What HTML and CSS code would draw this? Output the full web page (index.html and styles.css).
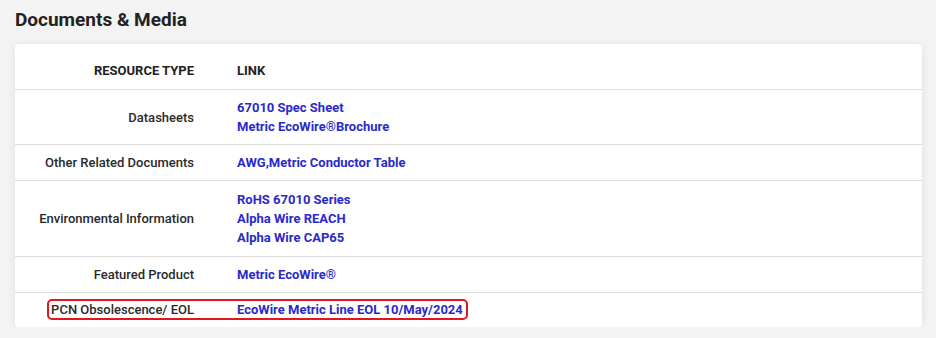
FILE: index.html
```html
<!DOCTYPE html>
<html lang="en">
<head>
    <meta charset="UTF-8">
    <title>Documents &amp; Media</title>
    <link rel="stylesheet" href="styles.css">
</head>
<body>
    <h2 class="section-title">Documents &amp; Media</h2>

    <div class="docs-card">
        <div class="docs-row docs-head">
            <div class="docs-type">RESOURCE TYPE</div>
            <div class="docs-links">LINK</div>
        </div>

        <div class="docs-row">
            <div class="docs-type">Datasheets</div>
            <div class="docs-links">
                <a href="#">67010 Spec Sheet</a>
                <a href="#">Metric EcoWire®Brochure</a>
            </div>
        </div>

        <div class="docs-row">
            <div class="docs-type">Other Related Documents</div>
            <div class="docs-links">
                <a href="#">AWG,Metric Conductor Table</a>
            </div>
        </div>

        <div class="docs-row tall">
            <div class="docs-type">Environmental Information</div>
            <div class="docs-links">
                <a href="#">RoHS 67010 Series</a>
                <a href="#">Alpha Wire REACH</a>
                <a href="#">Alpha Wire CAP65</a>
            </div>
        </div>

        <div class="docs-row">
            <div class="docs-type">Featured Product</div>
            <div class="docs-links">
                <a href="#">Metric EcoWire®</a>
            </div>
        </div>

        <div class="docs-row flagged">
            <div class="docs-type">PCN Obsolescence/ EOL</div>
            <div class="docs-links">
                <a href="#">EcoWire Metric Line EOL 10/May/2024</a>
            </div>
            <span class="flag-box"></span>
        </div>
    </div>
</body>
</html>
```

FILE: styles.css
```css
:root {
    --bg: #f3f3f3;
    --text: #222222;
    --label: #2a2a2a;
    --link: #2a2acb;
    --line: #dedede;
    --flag: #e3161d;
}

* {
    margin: 0;
    padding: 0;
    box-sizing: border-box;
}

body {
    background: var(--bg);
    font-family: 'Roboto', 'Liberation Sans', sans-serif;
    color: var(--text);
    padding: 9px 14px 0 15px;
}

.section-title {
    font-size: 19px;
    font-weight: 700;
    line-height: 22px;
    color: var(--text);
    margin-bottom: 13px;
}

.docs-card {
    background: #fff;
    border-radius: 4px;
    box-shadow: 0 1px 8px rgba(0, 0, 0, 0.08);
}

.docs-row {
    display: grid;
    grid-template-columns: 200px 1fr;
    align-items: center;
    padding: 8px 0;
    border-bottom: 1px solid var(--line);
    font-size: 13px;
    line-height: 19px;
}

.docs-row:last-child {
    border-bottom: none;
}

.docs-row.tall {
    padding: 9px 0;
}

.docs-head {
    padding: 17px 0 9px;
    font-weight: 700;
    color: var(--text);
}

.docs-type {
    text-align: right;
    padding-right: 21px;
    font-weight: 500;
    color: var(--label);
}

.docs-head .docs-type {
    font-weight: 700;
    color: var(--text);
}

.docs-links {
    padding-left: 22px;
    display: flex;
    flex-direction: column;
}

.docs-links a {
    color: var(--link);
    font-weight: 700;
    text-decoration: none;
}

.docs-row.flagged {
    position: relative;
    padding: 7px 0 8px;
}

.flag-box {
    position: absolute;
    left: 32px;
    top: 6px;
    width: 421px;
    height: 21px;
    border: 2px solid var(--flag);
    border-radius: 5px;
}
```
